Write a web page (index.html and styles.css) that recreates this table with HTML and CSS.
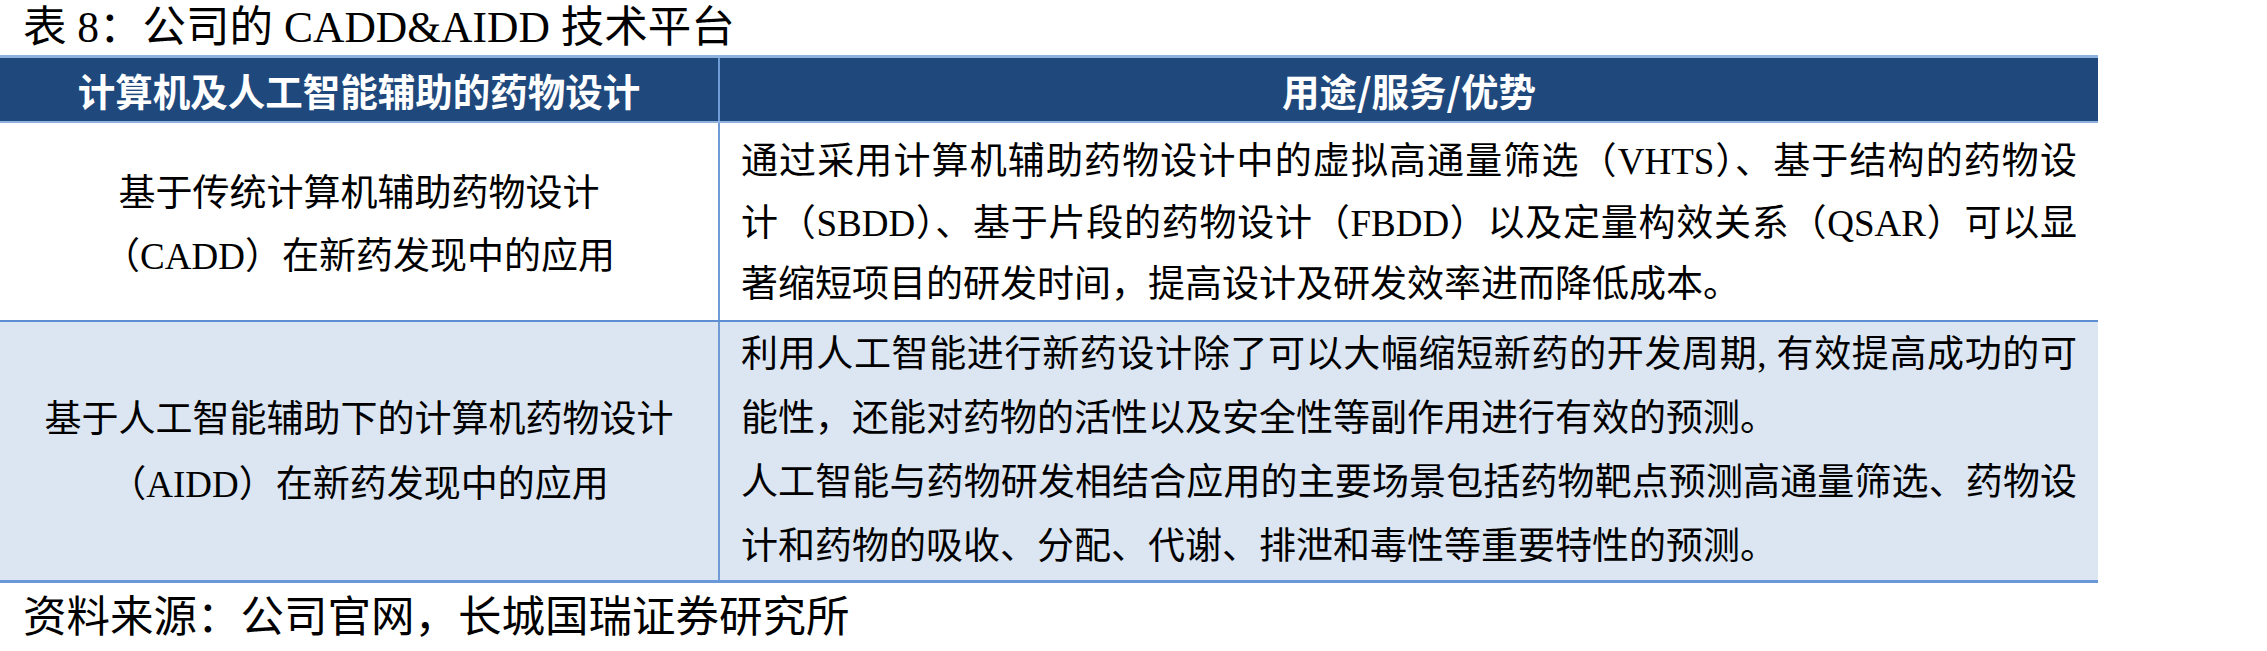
FILE: index.html
```html
<!DOCTYPE html>
<html lang="zh-CN">
<head>
<meta charset="utf-8">
<title>表 8：公司的 CADD&amp;AIDD 技术平台</title>
<link rel="stylesheet" href="styles.css">
</head>
<body>
<div class="page">
  <div class="title">表 8：公司的 CADD&amp;AIDD 技术平台</div>
  <div class="table">
    <div class="row head">
      <div class="cell c1">计算机及人工智能辅助的药物设计</div>
      <div class="cell c2">用途/服务/优势</div>
    </div>
    <div class="row r1">
      <div class="cell c1">
        <div class="lt">
          <div>基于传统计算机辅助药物设计</div>
          <div>（CADD）在新药发现中的应用</div>
        </div>
      </div>
      <div class="cell c2">
        <div class="jl">通过采用计算机辅助药物设计中的虚拟高通量筛选（VHTS）、基于结构的药物设</div>
        <div class="jl">计（SBDD）、基于片段的药物设计（FBDD）以及定量构效关系（QSAR）可以显</div>
        <div class="ll">著缩短项目的研发时间，提高设计及研发效率进而降低成本。</div>
      </div>
    </div>
    <div class="row r2">
      <div class="cell c1">
        <div class="lt">
          <div>基于人工智能辅助下的计算机药物设计</div>
          <div>（AIDD）在新药发现中的应用</div>
        </div>
      </div>
      <div class="cell c2">
        <div class="jl">利用人工智能进行新药设计除了可以大幅缩短新药的开发周期, 有效提高成功的可</div>
        <div class="ll">能性，还能对药物的活性以及安全性等副作用进行有效的预测。</div>
        <div class="jl">人工智能与药物研发相结合应用的主要场景包括药物靶点预测高通量筛选、药物设</div>
        <div class="ll">计和药物的吸收、分配、代谢、排泄和毒性等重要特性的预测。</div>
      </div>
    </div>
  </div>
  <div class="source">资料来源：公司官网，长城国瑞证券研究所</div>
</div>
</body>
</html>
```

FILE: styles.css
```css
html, body {
  margin: 0;
  padding: 0;
  background: #ffffff;
}

.page {
  width: 2267px;
  font-family: "Liberation Serif", "Noto Sans CJK SC", serif;
  color: #000000;
}

.title {
  height: 55px;
  line-height: 55px;
  padding-left: 23px;
  font-size: 43.5px;
  white-space: nowrap;
}

.table {
  width: 2098px;
}

.row {
  display: grid;
  grid-template-columns: 718px 1378px;
  column-gap: 2px;
  background: #6f9bd6;
}

.cell {
  box-sizing: border-box;
}

.head {
  border-top: 3px solid #8fb1de;
  border-bottom: 2px solid #8fb1de;
}

.head .cell {
  height: 63px;
  line-height: 63px;
  background: #1f497d;
  color: #ffffff;
  font-family: "Noto Sans CJK SC", sans-serif;
  font-weight: 700;
  font-size: 37.5px;
  text-align: center;
}

.r1 {
  border-bottom: 2px solid #5f8fd2;
}

.r1 .cell {
  height: 197px;
  background: #ffffff;
}

.r2 {
  border-bottom: 3px solid #6a98d8;
}

.r2 .cell {
  height: 258px;
  background: #dce6f2;
}

.r1 .c1,
.r2 .c1 {
  display: flex;
  align-items: center;
  justify-content: center;
  font-size: 37px;
  text-align: center;
}

.r1 .lt {
  line-height: 63px;
  padding-top: 6px;
}

.r2 .lt {
  line-height: 65px;
  padding-top: 2px;
}

.r1 .c2,
.r2 .c2 {
  font-size: 37px;
  padding-left: 21px;
  padding-right: 21px;
}

.r1 .c2 {
  line-height: 61.5px;
  padding-top: 8px;
}

.r2 .c2 {
  line-height: 64px;
  padding-top: 1px;
}

.jl {
  text-align: justify;
  text-align-last: justify;
}

.ll {
  text-align: left;
}

.source {
  height: 62px;
  line-height: 62px;
  padding-left: 23px;
  font-size: 43.5px;
  font-family: "Noto Sans CJK SC", sans-serif;
  white-space: nowrap;
}
```
